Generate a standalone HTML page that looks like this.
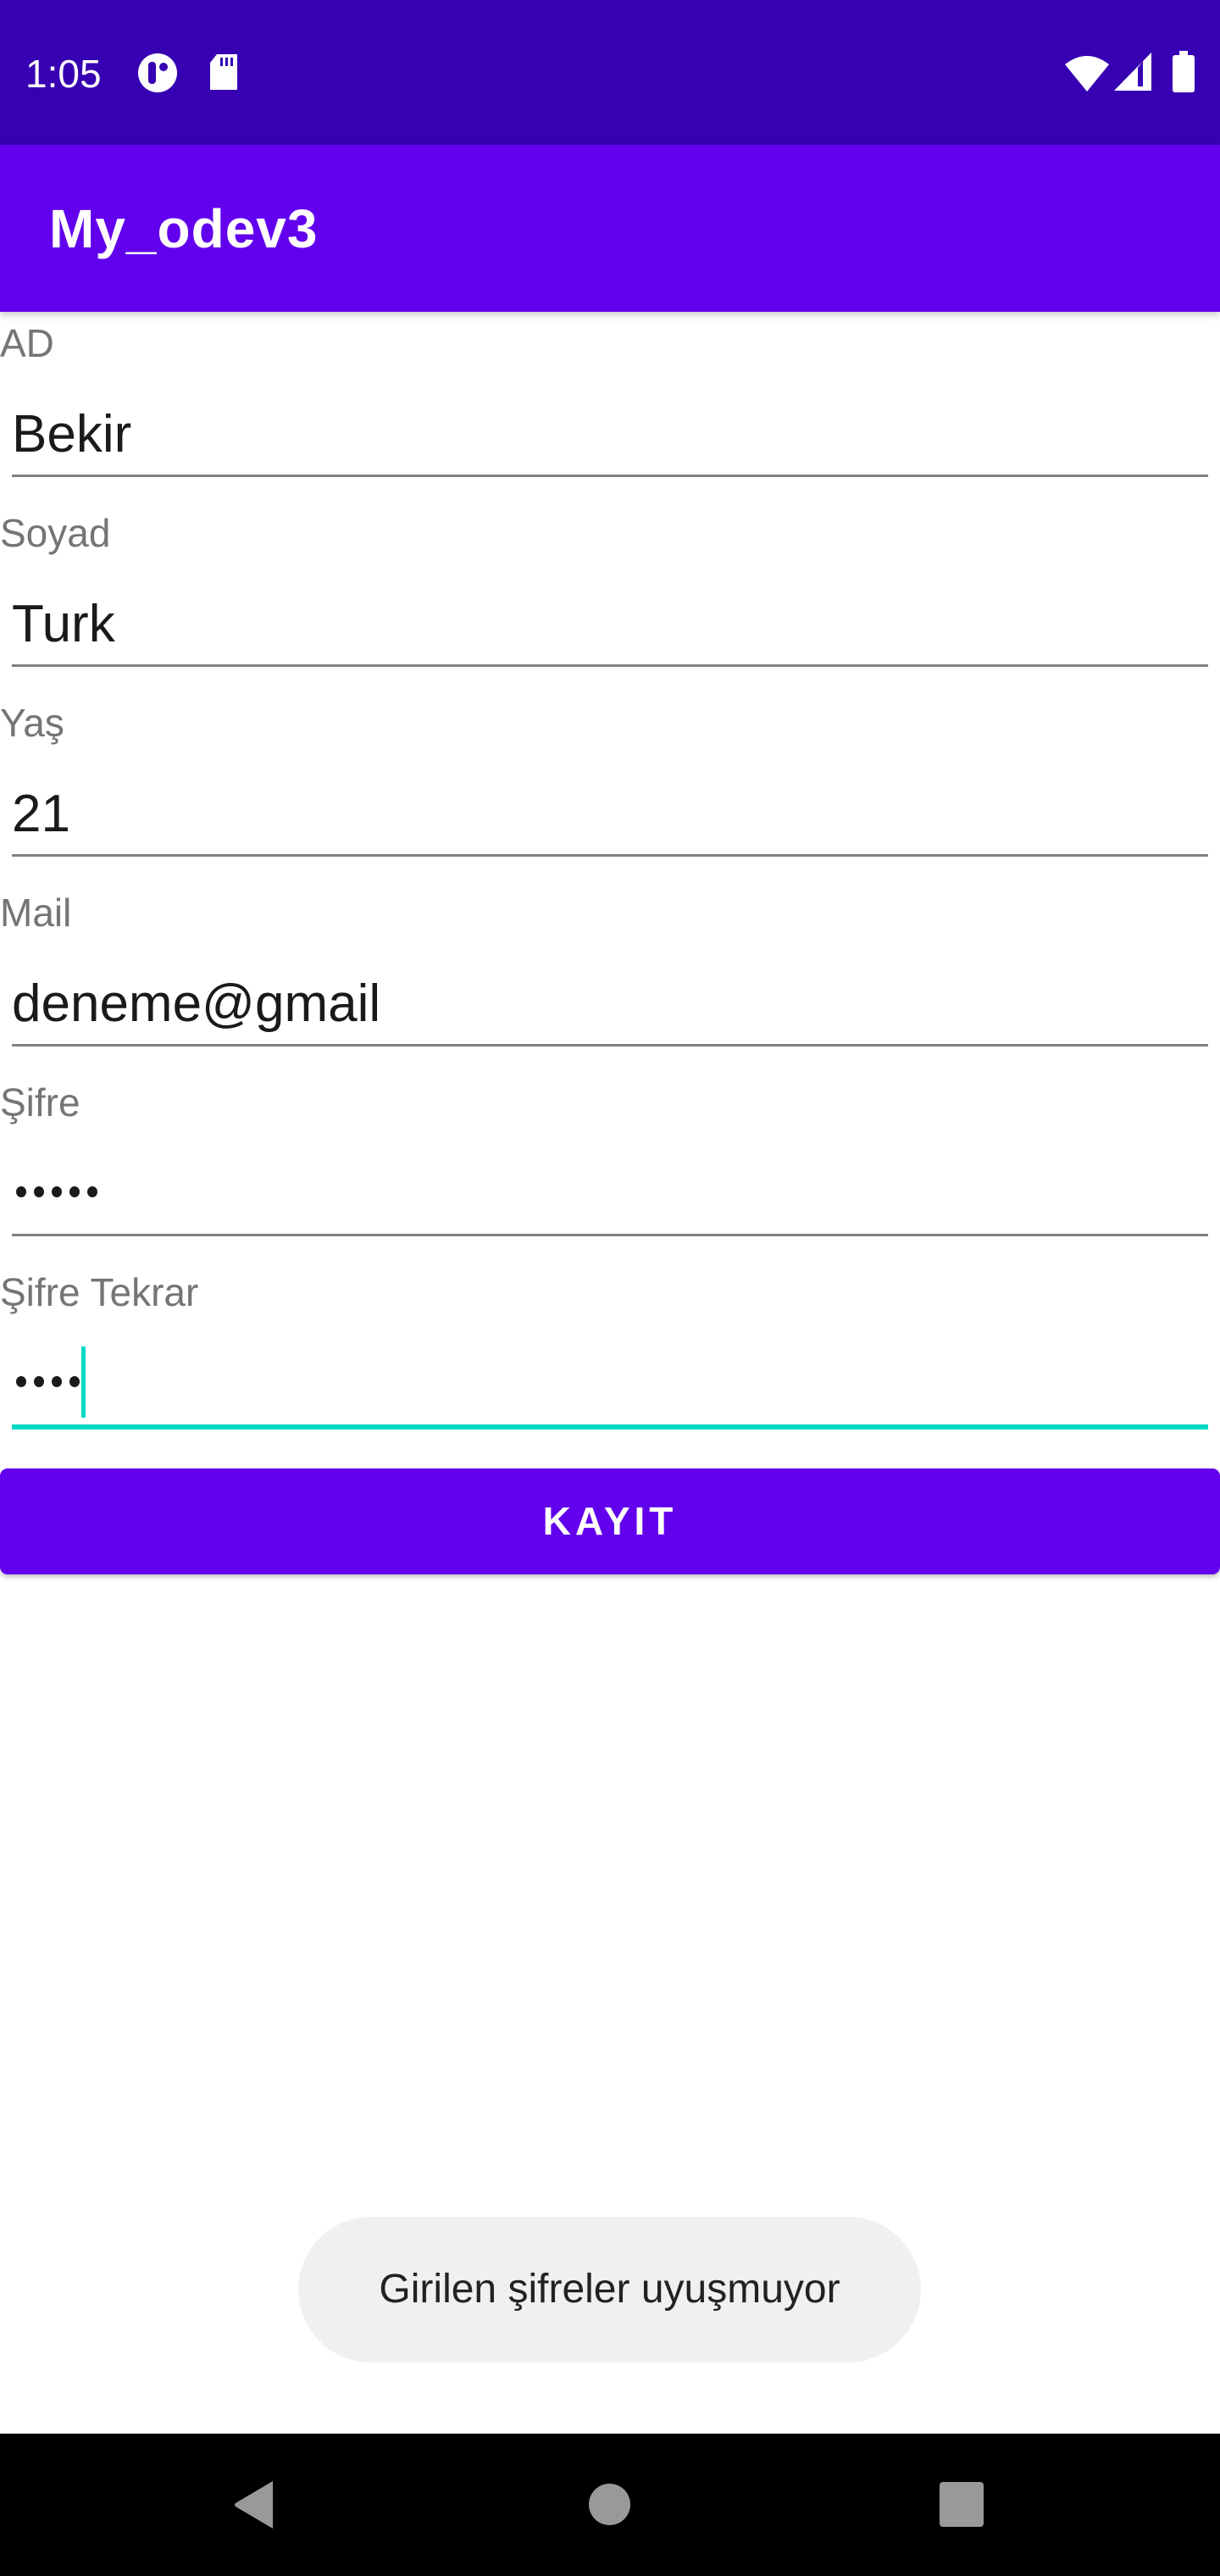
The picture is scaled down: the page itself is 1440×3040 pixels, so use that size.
<!DOCTYPE html>
<html><head><meta charset="utf-8"><style>
*{margin:0;padding:0;box-sizing:border-box}
body{width:1440px;height:3040px;position:relative;background:#fff;font-family:"Liberation Sans",Roboto,sans-serif;overflow:hidden}
.abs{position:absolute}
.status{left:0;top:0;width:1440px;height:171px;background:#3700B3}
.appbar{left:0;top:171px;width:1440px;height:197px;background:#6200EE;box-shadow:0 4px 8px rgba(0,0,0,.2)}
.label{left:0;font-size:46px;color:#757575;line-height:1}
.val{left:14px;font-size:62px;color:#1a1a1a;line-height:1}
.line{left:14px;width:1412px;height:3px;background:#808080}
.dot{width:12px;height:13px;border-radius:50%;background:#1a1a1a;position:absolute}
</style></head><body>
<div class="abs status"></div>
<div class="abs" style="left:30px;top:64px;font-size:46px;color:#fff;line-height:1">1:05</div>
<svg class="abs" style="left:162px;top:62px" width="48" height="48" viewBox="0 0 48 48"><circle cx="24" cy="24" r="23" fill="#fff"/><rect x="13" y="11" width="9" height="26" rx="4" fill="#3700B3"/><circle cx="31" cy="17" r="5" fill="#3700B3"/></svg>
<svg class="abs" style="left:246px;top:64px" width="36" height="44" viewBox="0 0 36 44"><path d="M10 0H34V42H2V10Z" fill="#fff"/><rect x="14" y="4" width="3" height="10" fill="#3700B3"/><rect x="20" y="4" width="3" height="10" fill="#3700B3"/><rect x="26" y="4" width="3" height="10" fill="#3700B3"/></svg>
<svg class="abs" style="left:1255px;top:62px" width="56" height="46" viewBox="0 0 56 46"><path d="M2 14Q28 -6 54 14L28 46Z" fill="#fff"/></svg>
<svg class="abs" style="left:1315px;top:62px" width="44" height="46" viewBox="0 0 44 46"><path d="M44 0V45H0Z" fill="#fff"/><path d="M28 18V40H34V10Z" fill="#3700B3"/></svg>
<svg class="abs" style="left:1384px;top:60px" width="26" height="50" viewBox="0 0 26 50"><rect x="8" y="0" width="10" height="6" fill="#fff"/><rect x="0" y="5" width="26" height="44" rx="3" fill="#fff"/></svg>
<div class="abs appbar"></div>
<div class="abs" style="left:58px;top:238px;font-size:64px;color:#fff;font-weight:bold;line-height:1;letter-spacing:1px">My_odev3</div>

<div class="abs label" style="top:382px">AD</div>
<div class="abs val" style="top:482px">Bekir</div>
<div class="abs line" style="top:560px"></div>

<div class="abs label" style="top:606px">Soyad</div>
<div class="abs val" style="top:706px">Turk</div>
<div class="abs line" style="top:784px"></div>

<div class="abs label" style="top:830px">Yaş</div>
<div class="abs val" style="top:930px">21</div>
<div class="abs line" style="top:1008px"></div>

<div class="abs label" style="top:1054px">Mail</div>
<div class="abs val" style="top:1154px">deneme@gmail</div>
<div class="abs line" style="top:1232px"></div>

<div class="abs label" style="top:1278px">Şifre</div>
<div class="dot" style="left:19px;top:1400px"></div>
<div class="dot" style="left:40px;top:1400px"></div>
<div class="dot" style="left:61px;top:1400px"></div>
<div class="dot" style="left:82px;top:1400px"></div>
<div class="dot" style="left:103px;top:1400px"></div>
<div class="abs line" style="top:1456px"></div>

<div class="abs label" style="top:1502px">Şifre Tekrar</div>
<div class="dot" style="left:19px;top:1624px"></div>
<div class="dot" style="left:40px;top:1624px"></div>
<div class="dot" style="left:61px;top:1624px"></div>
<div class="dot" style="left:82px;top:1624px"></div>
<div class="abs" style="left:96px;top:1589px;width:5px;height:84px;background:#03DAC5"></div>
<div class="abs" style="left:14px;top:1681px;width:1412px;height:6px;background:#03DAC5"></div>

<div class="abs" style="left:0;top:1733px;width:1440px;height:125px;background:#6200EE;border-radius:9px;box-shadow:0 3px 6px rgba(0,0,0,.25);color:#fff;font-size:46px;font-weight:bold;letter-spacing:5px;text-align:center;line-height:125px">KAYIT</div>

<div class="abs" style="left:352px;top:2616px;width:735px;height:172px;background:#f0f0f0;border-radius:86px;color:#222;font-size:48px;text-align:center;line-height:172px">Girilen şifreler uyuşmuyor</div>

<div class="abs" style="left:0;top:2872px;width:1440px;height:168px;background:#000"></div>
<svg class="abs" style="left:274px;top:2926px" width="52" height="60" viewBox="0 0 52 60"><path d="M48 2V58L4 32Q2 30 4 28Z" fill="#999"/></svg>
<div class="abs" style="left:695px;top:2931px;width:49px;height:49px;border-radius:50%;background:#999"></div>
<div class="abs" style="left:1109px;top:2929px;width:52px;height:53px;border-radius:4px;background:#999"></div>
</body></html>
